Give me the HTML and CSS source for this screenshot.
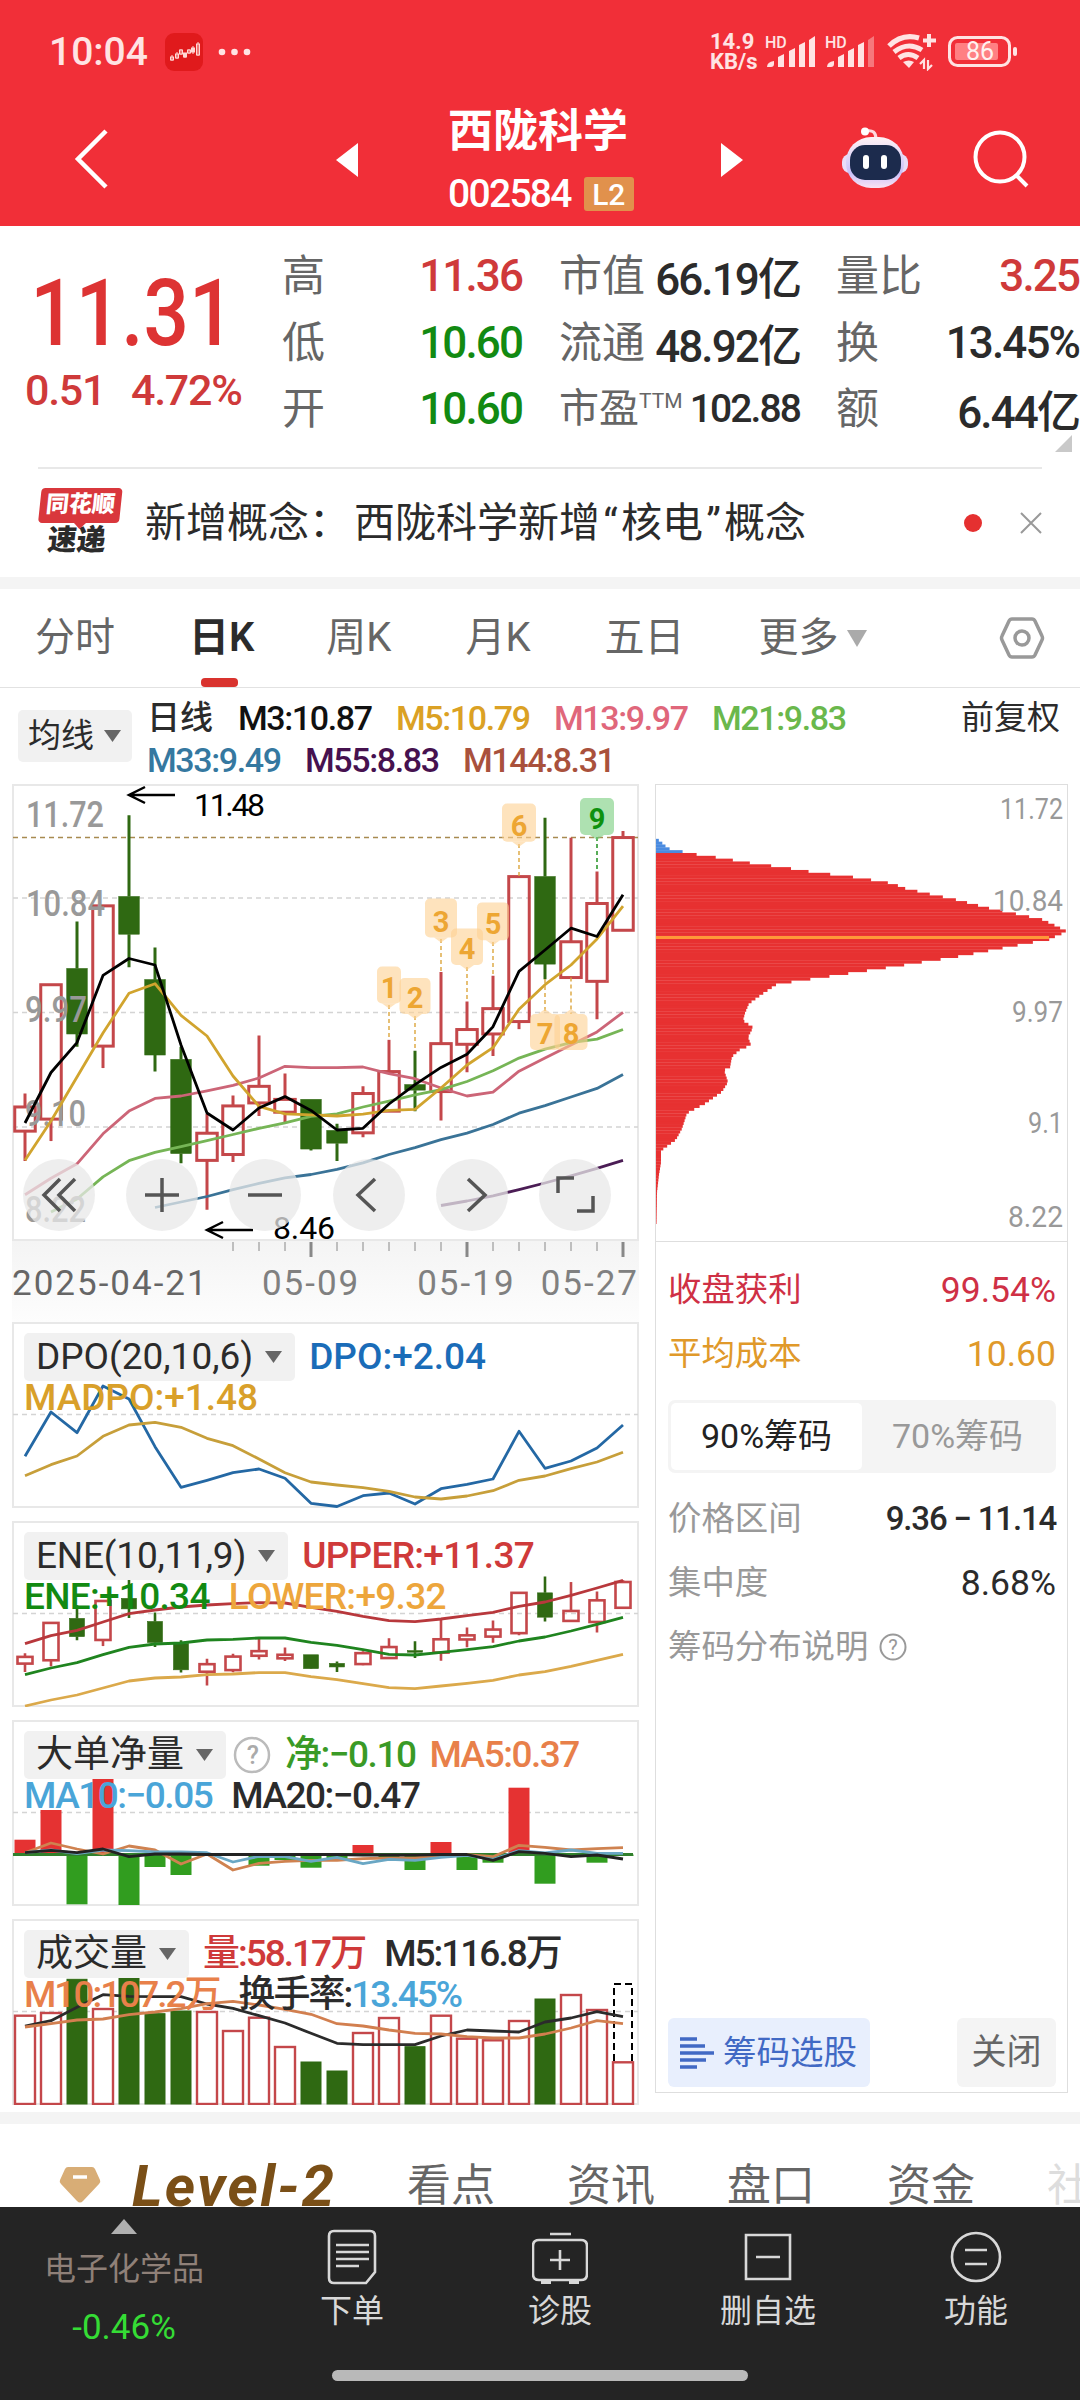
FILE: index.html
```html
<!DOCTYPE html>
<html lang="zh-CN">
<head>
  <meta charset="UTF-8">
  <title>西陇科学 002584</title>
  <link rel="stylesheet" href="styles.css">
</head>
<body>
  <div class="phone">
    <header class="header">
      <div class="status">
        <span class="status__time">10:04</span>
        <svg class="status__app" width="38" height="38" viewBox="0 0 38 38">
          <rect width="38" height="38" rx="9" fill="#e01a1c"/>
          <g fill="none" stroke="#ffd9d6" stroke-width="1">
            <path d="M7 22v6M12 19v7M16 16v6M20 20v5M24 16v5M28 13v8M33 9v14"/>
            <rect x="5.500" y="24" width="3" height="3"/><rect x="10.500" y="21" width="3" height="4"/>
            <rect x="14.500" y="17" width="3" height="4"/><rect x="18.500" y="20" width="3" height="4" fill="#ffd9d6"/>
            <rect x="22.500" y="17" width="3" height="3"/><rect x="26.500" y="15" width="3" height="4" fill="#ffd9d6"/>
            <rect x="31.500" y="11" width="3" height="11"/>
          </g>
        </svg>
        <svg width="34" height="8" viewBox="0 0 34 8" fill="#ffe3e3"><circle cx="4" cy="4" r="3.300"/><circle cx="16.500" cy="4" r="3.300"/><circle cx="29" cy="4" r="3.300"/></svg>
        <span class="status__speed"><span>14.9</span><span>KB/s</span></span>
        <svg class="status__signal" width="52" height="36" viewBox="0 0 52 36" fill="#ffe3e3">
          <text x="0" y="14" font-size="16" class="svg-bold">HD</text>
          <path d="M2 33q0-5 7-6v3q0 3-3 3zM13 23l6-3v13h-6zM24 17l6-3v19h-6zM34 11l6-3v25h-6zM44 6l6-4v31h-6z"/>
        </svg>
        <svg class="status__signal" width="54" height="36" viewBox="0 0 54 36" fill="#ffe3e3">
          <text x="0" y="14" font-size="16" class="svg-bold">HD</text>
          <path d="M2 33q0-5 7-6v3q0 3-3 3zM13 23l6-3v13h-6zM23 17l6-3v19h-6zM33 11l6-3v25h-6z"/>
          <path d="M43 6l6-4v31h-6z" opacity=".4"/>
        </svg>
        <svg class="status__wifi" width="52" height="38" viewBox="0 0 52 38" fill="none" stroke="#ffe3e3" stroke-width="5">
          <path d="M2 13Q15 0 32 5M7 19q14-11 28-2M12 25q9-7 19 0"/>
          <path d="M16 29q6-3 11 0l-5 6z" fill="#ffe3e3" stroke="none"/>
          <path d="M42 1v13M36 7.500h13" stroke-width="4"/>
          <path d="M37 36v-9l-4 4M41 27v9l4-4" stroke-width="2.200"/>
        </svg>
        <svg class="status__battery" width="70" height="32" viewBox="0 0 70 32">
          <rect x="1.500" y="1.500" width="60" height="28" rx="8" fill="none" stroke="#ffe3e3" stroke-width="3"/>
          <rect x="7" y="7" width="43" height="17" rx="2" fill="#ff8083"/>
          <rect x="65" y="11" width="4" height="9" rx="2" fill="#ffe3e3"/>
          <text x="32" y="24" font-size="25" text-anchor="middle" fill="#fff1f0">86</text>
        </svg>
      </div>
      <div class="titlebar">
        <svg class="titlebar__back" width="36" height="62" viewBox="0 0 36 62" fill="none" stroke="#fff" stroke-width="4.500"><path d="M32 3L4 31l28 28"/></svg>
        <svg class="titlebar__prev" width="22" height="34" viewBox="0 0 22 34" fill="#fff"><path d="M22 0v34L0 17z"/></svg>
        <div class="titlebar__name">
          <h1>西陇科学</h1>
          <p>002584 <span class="level-badge">L2</span></p>
        </div>
        <svg class="titlebar__next" width="22" height="34" viewBox="0 0 22 34" fill="#fff"><path d="M0 0v34l22-17z"/></svg>
        <svg class="titlebar__robot" width="68" height="62" viewBox="0 0 68 62">
          <defs>
            <linearGradient id="head" x1="0" y1="0" x2="0" y2="1"><stop offset="0" stop-color="#fff2f5"/><stop offset=".7" stop-color="#c9c0fa"/><stop offset="1" stop-color="#fbe4f3"/></linearGradient>
          </defs>
          <path d="M25 4q10-2 10 8" fill="none" stroke="#ffd9df" stroke-width="3"/>
          <circle cx="24" cy="4.500" r="4" fill="#fff"/>
          <rect x="1" y="27" width="66" height="19" rx="8" fill="#e9dcf8"/>
          <rect x="5" y="10" width="58" height="51" rx="25" fill="url(#head)"/>
          <rect x="9" y="18" width="51" height="35" rx="15" fill="#1c2b4d"/>
          <rect x="22" y="28" width="6" height="14" rx="3" fill="#fff"/>
          <rect x="40" y="28" width="6" height="14" rx="3" fill="#fff"/>
        </svg>
        <svg class="titlebar__search" width="58" height="58" viewBox="0 0 58 58" fill="none" stroke="#fff" stroke-width="4"><circle cx="27" cy="27" r="24.500"/><path d="M43 45l11 11"/></svg>
      </div>
    </header>

    <section class="quote">
      <div class="quote__main">
        <p class="quote__price">11.31</p>
        <p class="quote__change"><span>0.51</span><span>4.72%</span></p>
      </div>
      <div class="quote__grid">
        <span>高</span><b class="up">11.36</b><span>市值</span><b>66.19亿</b><span>量比</span><b class="up">3.25</b>
        <span>低</span><b class="down">10.60</b><span>流通</span><b>48.92亿</b><span>换</span><b>13.45%</b>
        <span>开</span><b class="down">10.60</b><span class="pe">市盈<sup>TTM</sup></span><b class="small">102.88</b><span>额</span><b>6.44亿</b>
      </div>
      <svg class="quote__corner" width="17" height="17" viewBox="0 0 17 17" fill="#c9c9c9"><path d="M17 0v17H0z"/></svg>
    </section>

    <section class="notice">
      <div class="logo">
        <span class="logo__top">同花顺</span>
        <span class="logo__bottom">速递</span>
      </div>
      <p class="notice__text"><span>新增概念：</span>西陇科学新增<i>“</i>核电<i>”</i>概念</p>
      <span class="notice__dot"></span>
      <svg width="22" height="22" viewBox="0 0 22 22" stroke="#999" stroke-width="2"><path d="M1 1l20 20M21 1L1 21"/></svg>
    </section>

    <nav class="periods">
      <span>分时</span>
      <span class="active">日K</span>
      <span>周K</span>
      <span>月K</span>
      <span>五日</span>
      <span>更多<svg width="20" height="17" viewBox="0 0 20 17" fill="#aaa"><path d="M0 0h20L10 17z"/></svg></span>
      <svg class="periods__set" width="46" height="44" viewBox="0 0 46 44" fill="none" stroke="#999" stroke-width="3.500"><path d="M13 3h20q2 0 3 2l7 15q1 2 0 4l-7 15q-1 2-3 2H13q-2 0-3-2L3 24q-1-2 0-4L10 5q1-2 3-2z"/><circle cx="23" cy="22" r="7"/></svg>
    </nav>

    <section class="ma">
      <span class="chip ma__chip">均线<svg width="17" height="12" viewBox="0 0 17 12"><path d="M0 0h17L8.500 12z"/></svg></span>
      <div class="ma__list">
        <p><span class="ma__label">日线</span><span class="m3">M3:10.87</span><span class="m5">M5:10.79</span><span class="m13">M13:9.97</span><span class="m21">M21:9.83</span></p>
        <p><span class="m33">M33:9.49</span><span class="m55">M55:8.83</span><span class="m144">M144:8.31</span></p>
      </div>
      <span class="ma__adjust">前复权</span>
    </section>

    <main class="charts">
      <div class="charts__left">
        <div class="kline">
          <svg id="kline" width="627" height="457" viewBox="0 0 627 457"></svg>
          <div class="kline__tools">
            <button><svg viewBox="0 0 36 36"><path d="M19 2L3 18l16 16M34 2L18 18l16 16"/></svg></button>
            <button><svg viewBox="0 0 36 36"><path d="M18 1v34M1 18h34"/></svg></button>
            <button><svg viewBox="0 0 36 36"><path d="M1 18h34"/></svg></button>
            <button><svg viewBox="0 0 36 36"><path d="M24 2L7 18l17 16"/></svg></button>
            <button><svg viewBox="0 0 36 36"><path d="M14 2l17 16-17 16"/></svg></button>
            <button><svg viewBox="0 0 36 36"><path d="M17 1H1v15M20 34h16V19"/></svg></button>
          </div>
        </div>
        <div class="axis">
          <svg id="ticks" width="627" height="18" viewBox="0 0 627 18"></svg>
          <div class="axis__dates"><span>2025-04-21</span><span>05-09</span><span>05-19</span><span>05-27</span></div>
        </div>

        <div class="panel">
          <svg id="dpo" width="627" height="186" viewBox="0 0 627 186"></svg>
          <div class="panel__legend">
            <p><span class="chip">DPO(20,10,6)<svg width="17" height="12" viewBox="0 0 17 12"><path d="M0 0h17L8.500 12z"/></svg></span><span class="blue">DPO:+2.04</span></p>
            <p><span class="gold">MADPO:+1.48</span></p>
          </div>
        </div>
        <div class="panel">
          <svg id="ene" width="627" height="186" viewBox="0 0 627 186"></svg>
          <div class="panel__legend panel__legend--ene">
            <p><span class="chip">ENE(10,11,9)<svg width="17" height="12" viewBox="0 0 17 12"><path d="M0 0h17L8.500 12z"/></svg></span><span class="up">UPPER:+11.37</span></p>
            <p><span class="down">ENE:+10.34</span><span class="amber">LOWER:+9.32</span></p>
          </div>
        </div>
        <div class="panel">
          <svg id="net" width="627" height="186" viewBox="0 0 627 186"></svg>
          <div class="panel__legend panel__legend--net">
            <p><span class="chip">大单净量<svg width="17" height="12" viewBox="0 0 17 12"><path d="M0 0h17L8.500 12z"/></svg></span><svg class="help" width="38" height="38" viewBox="0 0 38 38"><circle cx="19" cy="19" r="17" fill="none" stroke="#bbb" stroke-width="2.500"/><text x="19" y="28" font-size="25" text-anchor="middle" fill="#aaa">?</text></svg><span class="green">净:−0.10</span><span class="orange">MA5:0.37</span></p>
            <p><span class="sky">MA10:−0.05</span><span>MA20:−0.47</span></p>
          </div>
        </div>
        <div class="panel">
          <svg id="vol" width="627" height="186" viewBox="0 0 627 186"></svg>
          <div class="panel__legend panel__legend--vol">
            <p><span class="chip">成交量<svg width="17" height="12" viewBox="0 0 17 12"><path d="M0 0h17L8.500 12z"/></svg></span><span class="up">量:58.17万</span><span>M5:116.8万</span></p>
            <p><span class="orange">M10:107.2万</span><span>换手率:<em class="sky">13.45%</em></span></p>
          </div>
        </div>
      </div>

      <aside class="cost">
        <svg id="cost" width="411" height="456" viewBox="0 0 411 456"></svg>
        <div class="cost__info">
          <p class="crimson"><span>收盘获利</span><b>99.54%</b></p>
          <p class="orange2"><span>平均成本</span><b>10.60</b></p>
          <div class="segment"><span class="selected">90%筹码</span><span>70%筹码</span></div>
          <p><span>价格区间</span><b class="medium">9.36 − 11.14</b></p>
          <p><span>集中度</span><b>8.68%</b></p>
          <p class="cost__help"><span>筹码分布说明</span><svg width="28" height="28" viewBox="0 0 28 28"><circle cx="14" cy="14" r="12.500" fill="none" stroke="#999" stroke-width="2"/><text x="14" y="21" font-size="20" text-anchor="middle" fill="#999">?</text></svg></p>
        </div>
        <div class="cost__actions">
          <span class="pick"><svg width="34" height="34" viewBox="0 0 34 34" stroke="#4169c4" stroke-width="3.600"><path d="M0 3h17M0 10h25M0 17h34M0 24h26M0 31h17"/></svg>筹码选股</span>
          <span class="close">关闭</span>
        </div>
      </aside>
    </main>

    <section class="more">
      <svg width="42" height="38" viewBox="0 0 42 38"><path d="M9 1h24q2 0 3 2l5 11q1 2-1 4L24 35q-3 3-6 0L2 18q-2-2-1-4L6 3q1-2 3-2z" fill="#d8ad76"/><path d="M14 11h14" stroke="#fff" stroke-width="3.500"/></svg>
      <span class="more__level">Level-2</span>
      <span>看点</span><span>资讯</span><span>盘口</span><span>资金</span><span class="faded">社</span>
    </section>

    <footer class="tabbar">
      <div class="tabbar__row">
        <div class="sector">
          <svg width="26" height="15" viewBox="0 0 26 15" fill="#b0b0b0"><path d="M13 0l13 15H0z"/></svg>
          <p>电子化学品</p>
          <b>-0.46%</b>
        </div>
        <div class="tab">
          <svg viewBox="0 0 56 56"><path d="M10 2h36q5 0 5 5v36l-9 11H10q-5 0-5-5V7q0-5 5-5zM12 16h33M12 23h33M12 30h33M12 37h23"/></svg>
          <span>下单</span>
        </div>
        <div class="tab">
          <svg viewBox="0 0 56 56"><path d="M18 5h21M7 11h42q6 0 6 6v28q0 6-6 6H7q-6 0-6-6V17q0-6 6-6zM28 21v20M18 31h20"/><path d="M9 53h10M37 53h10" stroke-width="4"/></svg>
          <span>诊股</span>
        </div>
        <div class="tab">
          <svg viewBox="0 0 56 56"><path d="M6 6h44v44H6zM16 28h24"/></svg>
          <span>删自选</span>
        </div>
        <div class="tab">
          <svg viewBox="0 0 56 56"><circle cx="28" cy="28" r="24"/><path d="M17 21h22M17 35h22"/></svg>
          <span>功能</span>
        </div>
      </div>
      <div class="home-bar"></div>
    </footer>
  </div>
  <script src="script.js"></script>
</body>
</html>
```
FILE: styles.css
```css
* {
  box-sizing: border-box;
  margin: 0;
  padding: 0;
}

body {
  width: 1080px;
  background-color: #fff;
  color: #2b2b2b;
  font-family: Roboto, "Noto Sans CJK SC", sans-serif;
  overflow: hidden;
}

svg {
  display: block;
  flex: none;
}

b, em, i {
  font-weight: inherit;
  font-style: normal;
}

.phone {
  width: 1080px;
  height: 2400px;
  display: flex;
  flex-direction: column;
  overflow: hidden;
}

.phone > * {
  flex: none;
}

/* Shared colours */
.up { color: #cf3a3a; }
.down { color: #128a12; }
.green { color: #3a9a26; }
.blue { color: #1a6cb8; }
.gold { color: #d9a02a; }
.amber { color: #eda63c; }
.orange { color: #e8804a; }
.sky { color: #4aa5d8; }

/* Header */
.header {
  height: 226px;
  background-color: #f12f38;
  color: #fff;
}

.status {
  height: 103px;
  padding: 0 62px 0 49px;
  display: flex;
  align-items: center;
  color: #ffe3e3;
}

.status__time {
  width: 116px;
  font-size: 39px;
  font-weight: 500;
}

.status__app {
  margin-right: 15px;
}

.status__speed {
  margin-left: auto;
  width: 55px;
  font-size: 22px;
  line-height: 20px;
  font-weight: 700;
}

.status__speed span {
  display: block;
}

.status__signal {
  margin-right: 8px;
  overflow: visible;
}

.status__wifi {
  margin-right: 9px;
}

.svg-bold {
  font-weight: 500;
}

.titlebar {
  height: 123px;
  display: flex;
  align-items: center;
}

.titlebar svg {
  margin-bottom: 14px;
}

.titlebar svg.titlebar__back { margin-left: 74px; margin-bottom: 12px; }
.titlebar svg.titlebar__prev { margin-left: 226px; margin-bottom: 10px; }
.titlebar svg.titlebar__next { margin-left: 83px; margin-bottom: 10px; }
.titlebar svg.titlebar__robot { margin-left: 98px; }
.titlebar svg.titlebar__search { margin-left: 64px; margin-bottom: 11px; }

.titlebar__name {
  width: 190px;
  margin: 0 0 7px 90px;
  white-space: nowrap;
}

.titlebar__name h1 {
  font-size: 45px;
  line-height: 54px;
  font-weight: 700;
}

.titlebar__name p {
  margin-top: 12px;
  display: flex;
  align-items: center;
  gap: 13px;
  font-size: 39px;
  line-height: 46px;
  font-weight: 500;
  letter-spacing: -1.7px;
}

.level-badge {
  width: 50px;
  height: 34px;
  border-radius: 3px;
  background-color: #e1914c;
  font-size: 30px;
  line-height: 35px;
  text-align: center;
  letter-spacing: 0;
}

/* Quote */
.quote {
  position: relative;
  height: 241px;
  display: flex;
  overflow: hidden;
}

.quote__main {
  width: 282px;
  padding: 36px 0 0 25px;
  color: #dd3333;
}

.quote__price {
  padding-left: 6px;
  font-size: 92px;
  line-height: 104px;
  font-weight: 500;
  white-space: nowrap;
  transform: scaleX(0.87);
  transform-origin: left;
}

.quote__change {
  display: flex;
  gap: 26px;
  font-size: 43px;
  line-height: 48px;
  color: #cf3a3a;
  font-weight: 500;
  letter-spacing: -1.3px;
}

.quote__grid {
  display: grid;
  grid-template-columns: 142px 98px 170px 108px 170px 109px;
  grid-template-rows: repeat(3, 66.5px);
  padding-top: 17px;
  align-items: center;
  font-size: 43px;
  color: #666;
  white-space: nowrap;
}

.quote__grid span {
  line-height: 60px;
}

.quote__grid span:nth-child(6n+3) {
  padding-left: 37px;
}

.quote__grid span:nth-child(6n+5) {
  padding-left: 36px;
}

.quote__grid b {
  justify-self: end;
  font-size: 44px;
  font-weight: 500;
  letter-spacing: -1.9px;
  color: #2b2b2b;
}

.quote__grid b.small {
  font-size: 39px;
}

.quote__grid b.up { color: #cf3a3a; }
.quote__grid b.down { color: #128a12; }

.quote__grid .pe {
  font-size: 40px;
}

.quote__grid sup {
  font-size: 21px;
  line-height: 0;
  vertical-align: 14px;
}

.quote__corner {
  position: absolute;
  right: 8px;
  bottom: 15px;
}

/* Notice */
.notice {
  height: 110px;
  margin: 0 38px;
  border-top: 2px solid #e8e8e8;
  display: flex;
  align-items: center;
}

.logo {
  width: 81px;
  margin-right: 26px;
  text-align: center;
  transform: skewX(-6deg);
}

.logo span {
  display: block;
  font-weight: 900;
  line-height: 33px;
}

.logo .logo__top {
  position: relative;
  height: 35px;
  border-radius: 4px;
  background-color: #d9373c;
  color: #fff;
  font-size: 23px;
}

.logo__top::after {
  content: "";
  position: absolute;
  left: 36px;
  top: 35px;
  border: 6px solid transparent;
  border-top-color: #d9373c;
}

.logo .logo__bottom {
  font-size: 29px;
  line-height: 35px;
}

.notice__text {
  font-size: 41px;
  line-height: 60px;
  white-space: nowrap;
}

.notice__text span {
  margin-right: 4px;
}

.notice__text i {
  display: inline-block;
  width: 21px;
  text-align: center;
}

.notice__dot {
  width: 18px;
  height: 18px;
  margin: 0 38px 0 auto;
  border-radius: 50%;
  background-color: #e53030;
}

/* Period tabs */
.periods {
  height: 111px;
  padding: 0 35px;
  border-top: 12px solid #f4f4f4;
  border-bottom: 1px solid #e2e2e2;
  display: flex;
  align-items: center;
  font-size: 40px;
  line-height: 98px;
  color: #666;
}

.periods span {
  display: flex;
  align-items: center;
  gap: 8px;
  margin-right: 74px;
}

.periods .active {
  position: relative;
  margin-right: 72px;
  color: #2b2b2b;
  font-weight: 600;
}

.periods .active::after {
  content: "";
  position: absolute;
  left: 12px;
  bottom: 0;
  width: 37px;
  height: 9px;
  border-radius: 4px;
  background-color: #d9332e;
}

.periods__set {
  margin-left: auto;
}

/* Moving averages */
.chip {
  display: inline-flex;
  align-items: center;
  border-radius: 5px;
  background-color: #f1f1f1;
  color: #2b2b2b;
}

.chip svg {
  fill: #666;
}

.ma {
  height: 96px;
  display: flex;
  padding: 9px 20px 0 18px;
  font-size: 33px;
  line-height: 42px;
}

.ma__chip {
  width: 114px;
  height: 52px;
  margin: 13px 15px 0 0;
  padding-left: 10px;
  gap: 10px;
}

.ma__list p {
  display: flex;
  font-weight: 500;
}

.ma__list span {
  width: 158px;
  font-size: 34px;
  letter-spacing: -1.4px;
}

.ma__list .ma__label {
  width: 91px;
  font-size: 33px;
  letter-spacing: 0;
}

.m3 { color: #111; }
.m5 { color: #dba124; }
.m13 { color: #e0677b; }
.m21 { color: #6ab84c; }
.m33 { color: #3578a0; }
.m55 { color: #46114f; }
.m144 { color: #a9513c; }

.ma__adjust {
  margin-left: auto;
}

/* Charts */
.charts {
  height: 1328px;
  display: flex;
  padding-left: 12px;
  gap: 16px;
}

.charts__left {
  width: 627px;
}

.kline, .panel {
  position: relative;
  background-color: #fff;
  box-shadow: inset 0 0 0 2px #e8e8e8;
}

.kline__tools {
  position: absolute;
  left: 11px;
  bottom: 10px;
  display: flex;
  gap: 31.2px;
}

.kline__tools button {
  width: 72px;
  height: 72px;
  border: 0;
  border-radius: 50%;
  background-color: rgba(232, 232, 232, 0.75);
  display: flex;
  align-items: center;
  justify-content: center;
}

.kline__tools svg {
  width: 36px;
  height: 36px;
  overflow: visible;
  fill: none;
  stroke: #555;
  stroke-width: 3.5;
}

.axis {
  height: 81px;
  background: linear-gradient(#f4f4f4, #fdfdfd);
}

.axis__dates {
  display: flex;
  font-size: 35px;
  line-height: 50px;
  letter-spacing: 2px;
  color: #808080;
  white-space: nowrap;
}

.axis__dates span:nth-child(1) { width: 251px; color: #666; }
.axis__dates span:nth-child(2) { width: 156px; }
.axis__dates span:nth-child(3) { width: 124px; }

.panel {
  height: 186px;
  margin-bottom: 13px;
}

.panel__legend {
  position: absolute;
  left: 12px;
  top: 11px;
  font-size: 37px;
  font-weight: 500;
  white-space: nowrap;
}

.panel__legend p {
  display: flex;
  align-items: center;
  height: 48px;
  line-height: 50px;
  gap: 14px;
}

.panel__legend p + p {
  height: 32px;
  line-height: 35px;
  gap: 19px;
}

.panel__legend .chip {
  height: 48px;
  padding: 0 13px 0 12px;
  gap: 12px;
  font-weight: 400;
  letter-spacing: 0;
}

.panel__legend--ene {
  letter-spacing: -0.7px;
}

.panel__legend--ene .chip {
  letter-spacing: -0.2px;
}

.panel__legend--net {
  letter-spacing: -1.5px;
}

.panel__legend--net .help {
  margin: 0 0 0 -7px;
}

.panel__legend--vol {
  letter-spacing: -2px;
}

.panel__legend--vol .up {
  margin-right: 5px;
}

/* Cost distribution */
.cost {
  width: 413px;
  height: 1309px;
  border: 1px solid #dedede;
  display: flex;
  flex-direction: column;
}

.cost__info {
  border-top: 1px solid #dedede;
  padding: 16px 11px 0 12px;
  font-size: 33.4px;
  color: #999;
}

.cost__info p {
  height: 64px;
  line-height: 64px;
  display: flex;
  justify-content: space-between;
}

.cost__info b {
  font-size: 35.5px;
  color: #2b2b2b;
}

.cost__info .medium {
  font-size: 33px;
  font-weight: 500;
  letter-spacing: -1.2px;
}

.cost__info .crimson, .cost__info .crimson b { color: #cf3045; }
.cost__info .orange2, .cost__info .orange2 b { color: #e0992a; }

.segment {
  height: 73px;
  margin: 14px 0;
  padding: 3px;
  border-radius: 7px;
  background-color: #f4f4f4;
  display: flex;
  font-size: 34px;
  line-height: 66px;
  text-align: center;
}

.segment span {
  flex: 1;
}

.segment .selected {
  border-radius: 5px;
  background-color: #fff;
  color: #222;
}

.cost__info .cost__help {
  justify-content: flex-start;
  align-items: center;
  gap: 11px;
}

.cost__actions {
  margin-top: auto;
  padding: 0 11px 5px 12px;
  display: flex;
  justify-content: space-between;
  line-height: 69px;
}

.cost__actions span {
  height: 69px;
  border-radius: 6px;
}

.pick {
  width: 202px;
  padding-left: 12px;
  display: flex;
  align-items: center;
  gap: 9px;
  background-color: #e8effd;
  color: #4169c4;
  font-size: 33.5px;
}

.close {
  width: 99px;
  text-align: center;
  background-color: #f4f4f4;
  color: #666;
  font-size: 35px;
}

/* Lower tabs */
.more {
  height: 95px;
  border-top: 12px solid #f4f4f4;
  padding: 32px 0 0 59px;
  display: flex;
  overflow: hidden;
  font-size: 44px;
  line-height: 60px;
  color: #666;
  white-space: nowrap;
}

.more > svg {
  margin-top: 10px;
  margin-right: 31px;
}

.more span {
  width: 160px;
  flex: none;
}

.more .more__level {
  width: 275px;
  font-size: 58px;
  font-weight: 700;
  font-style: italic;
  letter-spacing: 2.3px;
  color: #7a4f17;
}

.more .faded {
  color: #ddd;
}

/* Bottom bar */
.tabbar {
  height: 193px;
  background-color: #242424;
  color: #d8d8d8;
}

.tabbar__row {
  height: 163px;
  display: flex;
}

.sector {
  width: 248px;
  padding-top: 12px;
  display: flex;
  flex-direction: column;
  align-items: center;
  font-size: 32px;
}

.sector p {
  margin-top: 10px;
  line-height: 50px;
  color: #8f8078;
}

.sector b {
  margin-top: 10px;
  line-height: 48px;
  font-size: 35px;
  color: #35dc35;
}

.tab {
  width: 208px;
  padding-top: 22px;
  display: flex;
  flex-direction: column;
  align-items: center;
  font-size: 32px;
  line-height: 48px;
}

.tab svg {
  width: 56px;
  height: 56px;
  fill: none;
  stroke: #d8d8d8;
  stroke-width: 2.6;
}

.tab span {
  margin-top: 2px;
}

.home-bar {
  width: 416px;
  height: 11px;
  margin: 0 auto;
  border-radius: 6px;
  background-color: #b9b9b9;
}
```
FILE: script.js
```js
const NS = 'http://www.w3.org/2000/svg';
const RED = '#c4474a';
const GREEN = '#2f6912';

// x centre of the nth trading day
const dayX = i => 13 + 26 * i;

function add(svg, tag, attrs, text) {
  const el = document.createElementNS(NS, tag);
  for (const key in attrs) el.setAttribute(key, attrs[key]);
  if (text !== undefined) el.textContent = text;
  svg.appendChild(el);
  return el;
}

function line(svg, ys, color, start = 0, width = 2.8) {
  const points = ys.map((y, i) => `${dayX(i + start)},${y}`).join(' ');
  add(svg, 'polyline', { points, fill: 'none', stroke: color, 'stroke-width': width, 'stroke-linejoin': 'round' });
}

function dash(svg, y, color = '#d4d4d4') {
  add(svg, 'path', { d: `M1 ${y}H626`, stroke: color, 'stroke-width': 1.3, 'stroke-dasharray': '5 4' });
}

// [direction, body top, body bottom, high, low]
const candles = [
  [1, 9.247, 9.062, 9.35, 8.833], [1, 10.183, 9.154, 10.183, 8.986], [0, 10.307, 9.806, 10.668, 9.708],
  [1, 10.787, 9.713, 10.787, 9.545], [0, 10.858, 10.57, 11.48, 10.317], [0, 10.222, 9.645, 10.468, 9.518],
  [0, 9.611, 8.891, 9.708, 8.817], [1, 9.046, 8.838, 9.194, 8.46], [1, 9.255, 8.883, 9.334, 8.825],
  [1, 9.405, 9.278, 9.795, 9.178], [1, 9.305, 9.207, 9.503, 9.131], [0, 9.305, 8.925, 9.305, 8.914],
  [0, 9.067, 8.97, 9.118, 8.833], [1, 9.35, 9.049, 9.405, 9.015], [1, 9.518, 9.215, 9.761, 9.215],
  [0, 9.418, 9.376, 9.677, 9.215], [1, 9.732, 9.365, 10.28, 9.144], [1, 9.84, 9.727, 10.054, 9.513],
  [1, 10.0, 9.806, 10.251, 9.637], [1, 11.011, 9.901, 11.011, 9.843], [0, 11.011, 10.341, 11.462, 10.225],
  [1, 10.512, 10.238, 11.309, 10.238], [1, 10.805, 10.209, 11.05, 9.919], [1, 11.31, 10.6, 11.36, 10.6]
];

function drawCandles(svg, y, width, stroke) {
  candles.forEach(([up, top, bottom, high, low], i) => {
    const x = dayX(i);
    const color = up ? RED : GREEN;
    add(svg, 'path', { d: `M${x} ${y(high)}V${y(top)}M${x} ${y(bottom)}V${y(low)}`, stroke: color, 'stroke-width': stroke });
    add(svg, 'rect', {
      x: x - width / 2, y: y(top), width, height: Math.max(y(bottom) - y(top), 1),
      fill: up ? 'none' : GREEN, stroke: color, 'stroke-width': up ? stroke : 0.6
    });
  });
}

// Daily K chart
const k = document.getElementById('kline');
[114, 228.5, 343].forEach(y => dash(k, y));
dash(k, 53.5, '#a88a50');
drawCandles(k, p => (11.72 - p) * 130.6, 20.5, 3);

line(k, [410.8, 394.2, 379.8, 349.8, 327.1, 314.4, 312, 306.8, 301.3, 294, 282.3, 283.7, 283.7, 283, 289.6, 294.7, 304, 312, 308.2, 287.2, 274.1, 261, 247.9, 228.3], '#cc6577');
line(k, [428, 415, 392.9, 376.7, 368.4, 362.6, 356.7, 350.5, 344.3, 338.8, 332.3, 329.9, 323, 317.1, 310.9, 305.7, 297.5, 286.8, 274.1, 265.1, 258.6, 255.1, 245.5], '#76b556', 1);
line(k, [423.5, 418, 412.5, 405.6, 399.4, 393.9, 390.5, 385.3, 378.8, 370.5, 363.6, 355.7, 349.1, 340.5, 329.2, 321.6, 313, 304.4, 290.6], '#3a7397', 5);
line(k, [421.5, 417, 411.8, 405.6, 399, 391.8, 384.3, 376.3], '#4b1d55', 16);

// axis labels
[['11.72', 14, 43, 78], ['10.84', 14, 131.5, 79], ['9.97', 13, 238, 62], ['9.10', 13, 342.3, 61], ['8.22', 13, 438.3, 61]].forEach(([t, x, y, len]) => {
  add(k, 'text', { x, y, 'font-size': 36, 'font-weight': 500, fill: '#999', textLength: len, lengthAdjust: 'spacingAndGlyphs' }, t);
});

line(k, [376.3, 337, 293, 249, 209.3, 199.7, 231.4, 252, 292, 322.3, 329.9, 330.9, 332, 330.2, 326.4, 325.4, 304, 281, 263.7, 225.2, 200.7, 181, 154.9, 122.2], '#d1a42e');
line(k, [339, 288.5, 258.6, 191.4, 174.5, 181, 261, 329, 346, 324, 312.6, 326.4, 346, 344.3, 320, 300.6, 283.4, 270.3, 242.7, 187.3, 166, 144.2, 152.5, 110.8], '#000');

// highest and lowest price marks
add(k, 'path', { d: 'M163 11H117M133 3L117 11l16 8M241 446H195M211 438l-16 8 16 8', fill: 'none', stroke: '#000', 'stroke-width': 2.5 });
add(k, 'text', { x: 182, y: 31.5, 'font-size': 32, fill: '#000', textLength: 71 }, '11.48');
add(k, 'text', { x: 261, y: 454.5, 'font-size': 32, fill: '#000', textLength: 62 }, '8.46');

// nine-turn badges: [text, day, width, top, bottom, line start, line end]
[
  ['1', 14, 24, 182.5, 219.5, 221, 256], ['2', 15, 31, 194, 230, 232, 267], ['3', 16, 32, 114.6, 153.5, 155, 188],
  ['4', 17, 32, 144.6, 181, 183, 217.6], ['5', 18, 32, 118.4, 156.3, 158, 192], ['6', 19, 34, 19.6, 57.8, 60, 92.6],
  ['7', 20, 30, 230, 266, 195, 230], ['8', 21, 33, 230, 266, 193.5, 230], ['9', 22, 34, 14, 51, 53, 87.4]
].forEach(([t, i, w, top, bottom, from, to]) => {
  const x = dayX(i);
  const green = t === '9';
  const fill = green ? 'rgba(120,205,125,.6)' : 'rgba(253,208,145,.6)';
  const tip = from > bottom
    ? `M${x - 7} ${bottom}l7 5 7-5z`
    : `M${x - 7} ${top}l7-5 7 5z`;
  add(k, 'path', { d: `M${x} ${from}V${to}`, stroke: green ? '#128a12' : '#dca53c', 'stroke-width': 1.4, 'stroke-dasharray': '4 3' });
  add(k, 'rect', { x: x - w / 2, y: top, width: w, height: bottom - top, rx: 5, fill });
  add(k, 'path', { d: tip, fill });
  add(k, 'text', { x, y: bottom - 6, 'font-size': 29, 'font-weight': 700, 'text-anchor': 'middle', fill: green ? '#0e910e' : '#eda633' }, t);
});

// date ticks
const ticks = document.getElementById('ticks');
for (let i = 8; i < 24; i++) {
  const major = i === 11 || i === 17 || i === 23;
  add(ticks, 'path', { d: `M${dayX(i)} 1V${major ? 16 : 10}`, stroke: '#888', 'stroke-width': major ? 3 : 1 });
}

// DPO
const dpo = document.getElementById('dpo');
dash(dpo, 92.5);
line(dpo, [134.3, 90, 110.7, 64, 77, 124.7, 165.3, 158.3, 150.7, 147, 156.3, 181.3, 184.5, 173.7, 171, 182, 166.7, 162.3, 157, 109.3, 146.3, 139, 126, 103], '#2468a4');
line(dpo, [153.7, 142.7, 134, 114.3, 103, 100.3, 105.3, 116.3, 123.7, 137, 150.7, 160, 163, 165.7, 169.3, 175, 177, 174, 168.7, 158.3, 154, 146.7, 140, 130.3], '#c79f3a');

// ENE
const ene = document.getElementById('ene');
dash(ene, 92.5);
drawCandles(ene, p => 61 + (11.31 - p) * 36.3, 15, 2.6);
line(ene, [122.6, 114.6, 109.3, 101, 92.6, 89, 86, 84, 82.6, 81.6, 82, 86.3, 90.3, 95.3, 99.6, 100.6, 98, 94.6, 91.3, 85.3, 81, 74.3, 67, 59.3], '#b8383c');
line(ene, [153.6, 147, 141.6, 133.6, 126.3, 123, 122, 119, 118.3, 117, 117, 121.3, 124.3, 128.6, 133.3, 134, 131.3, 128.6, 125.6, 120, 116, 110, 103.3, 96.3], '#1f841f');
line(ene, [185, 179, 174, 167, 160, 157, 156, 153.6, 153, 151.6, 151.6, 155.6, 158.6, 162.6, 166.6, 167.6, 165, 162.3, 159.3, 154, 150.6, 145.3, 139.3, 133.3], '#dba94b');

// Net large orders, y of each bar end
const net = document.getElementById('net');
const zero = 134.5;
dash(net, 92.5);
[119.7, 90, 184.3, 56, 185, 147, 155, 136, 136, 145.7, 140, 147.7, 141, 125, 138, 150, 122, 150, 142.7, 67.7, 163.7, 136, 142.7, 136].forEach((y, i) => {
  add(net, 'rect', { x: dayX(i) - 10.5, y: Math.min(y, zero), width: 21, height: Math.abs(y - zero), fill: y < zero ? '#e53232' : '#319d1f' });
});
add(net, 'path', { d: `M1 ${zero}H621`, stroke: '#317f2c', 'stroke-width': 3 });
line(net, [132.7, 123, 129, 134, 126, 130, 144, 134, 150, 143.3, 141.3, 140.3, 140.3, 138.7, 138, 138, 135.3, 134.7, 136.7, 125.3, 127.3, 130, 128.7, 127.7], '#cf8250');
line(net, [132.7, 130, 133.7, 130, 130.7, 132, 132, 132.7, 142, 136.3, 136.7, 141.3, 137.3, 143.7, 139.3, 140.3, 137.3, 135.3, 139.3, 130.7, 133, 130, 133.3, 133.3], '#6aa7c4');
line(net, [132.7, 130.3, 132.7, 129, 136.7, 134, 134, 134.5, 134.5, 134.5, 134.5, 134.5, 134.5, 135, 135, 135, 134.5, 134.5, 140.3, 131.7, 133.3, 136.7, 135, 139], '#222');

// Volume
const vol = document.getElementById('vol');
dash(vol, 92.5);
[95.7, 93, 59.3, 89, 56, 93.7, 91, 92, 111, 97.7, 127, 142, 151, 113, 98, 126.7, 95.7, 118.7, 120.3, 101, 79, 75, 90, 142.3].forEach((y, i) => {
  const solid = [2, 4, 5, 6, 11, 12, 15, 20].includes(i);
  add(vol, 'rect', { x: dayX(i) - 10, y: y + 1, width: 20, height: 184 - y, fill: solid ? GREEN : '#fff', stroke: solid ? GREEN : RED, 'stroke-width': solid ? 1 : 2.4 });
});
add(vol, 'path', { d: `M${dayX(23) - 9} 142V65H${dayX(23) + 9}V142`, fill: 'none', stroke: '#000', 'stroke-width': 2, 'stroke-dasharray': '7 4' });
line(vol, [107, 101.7, 88.3, 75.7, 77.3, 77.7, 77.7, 85, 89.3, 96.7, 104, 114.3, 124.3, 125.7, 125.7, 125.7, 117, 111, 112, 113, 103, 99, 92.7, 97.7], '#2b2b2b');
line(vol, [108, 104.7, 101, 100, 95.7, 93, 89.7, 84.7, 82.3, 86, 90.3, 95.3, 104.7, 107, 111, 114.3, 115, 117.7, 119, 119, 115, 109, 101.7, 104.7], '#d27f4f');

// Cost distribution: [width, y]
const cost = document.getElementById('cost');
const profile = [
  [0, 51], [3, 54], [8, 58], [12, 62], [22, 64], [34, 67], [61, 71], [94, 76.5], [128, 81], [159, 86], [193, 90], [225, 95],
  [241, 98], [243, 100.5], [271, 107], [301, 113.5], [334, 122], [358, 127], [386, 133], [398, 138.5], [411, 145], [401, 149],
  [393, 153], [378, 155.5], [351, 160.5], [323, 166], [296, 171], [269, 175], [241, 179.5], [211, 184], [178, 189], [161, 191.5],
  [131, 196], [121, 197.5], [106, 207.5], [93, 217], [89, 226.5], [87, 234], [97, 241], [92, 250.5], [95, 258.5], [84, 263],
  [76, 270], [74, 281], [68, 283.5], [72, 295.5], [66, 305], [49, 317], [31, 326.5], [26, 342], [20, 353], [5, 364], [5, 376],
  [3, 388], [1, 405.5], [0.5, 437]
];
const step = 2.83;
for (let y = 51; y < 437; y += step) {
  const n = profile.findIndex(p => p[1] > y);
  const [w0, y0] = profile[n - 1];
  const [w1, y1] = profile[n];
  const width = w0 + (w1 - w0) * (y - y0) / (y1 - y0);
  add(cost, 'rect', { x: 0, y, width, height: step + 0.3, fill: y < 67 ? '#4a8be0' : '#e73131' });
}
add(cost, 'rect', { x: 0, y: 151, width: 393, height: 3, fill: '#ff9838' });
[['11.72', 34, 63], ['10.84', 126, 70], ['9.97', 237, 51], ['9.1', 348, 35], ['8.22', 441.8, 55]].forEach(([t, y, len]) => {
  add(cost, 'text', { x: 407 - len, y, 'font-size': 29, fill: '#999', textLength: len, lengthAdjust: 'spacingAndGlyphs' }, t);
});
```
